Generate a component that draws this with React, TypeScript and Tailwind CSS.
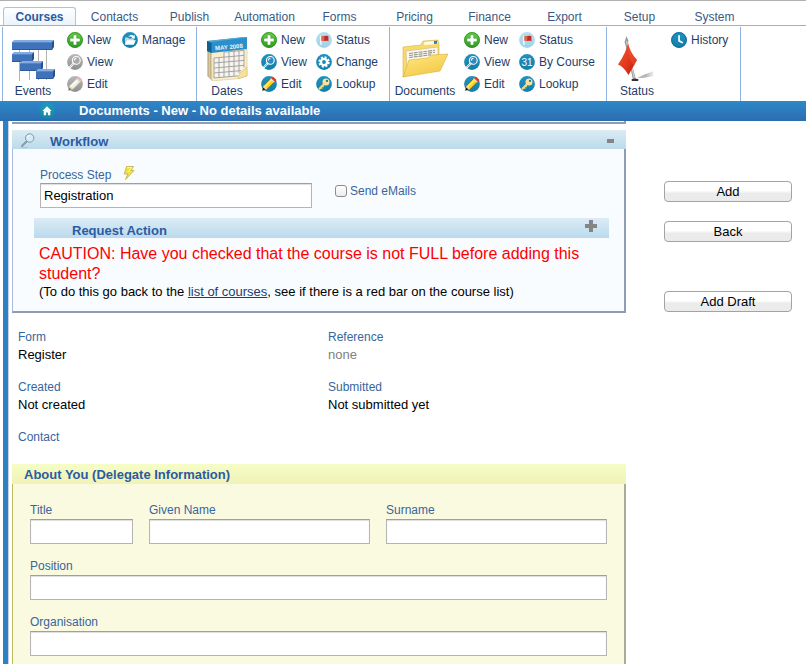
import { useState, type ReactNode } from "react";
import clsx from "clsx";

const tabs = ["Courses", "Contacts", "Publish", "Automation", "Forms", "Pricing", "Finance", "Export", "Setup", "System"];

/* Small round ribbon icons */
const rounds = {
  green: ["#6fcf4b", "#2a9a1c"],
  blue: ["#2391bf", "#0f7fab"],
  gray: ["#b9b9b9", "#8f8f8f"],
  pale: ["#b5dff0", "#9fd2e8"],
  teal: ["#1b9cba", "#0f86a8"],
};

function Round({ tone, children }: { tone: keyof typeof rounds; children: ReactNode }) {
  const [from, to] = rounds[tone];
  return (
    <svg viewBox="0 0 16 16" className="size-4 shrink-0" aria-hidden="true">
      <defs>
        <linearGradient id={`round-${tone}`} x1="0" y1="0" x2="0" y2="1">
          <stop offset="0" stopColor={from} />
          <stop offset="1" stopColor={to} />
        </linearGradient>
      </defs>
      <circle cx="8" cy="8" r="7.9" fill={`url(#round-${tone})`} />
      {children}
    </svg>
  );
}

const NewIcon = () => (
  <Round tone="green">
    <circle cx="8" cy="8" r="7.4" fill="none" stroke="#2c8f22" strokeWidth="0.8" />
    <path d="M6.3 3h3.4v3.3H13v3.4H9.7V13H6.3V9.7H3V6.3h3.3z" fill="#fff" stroke="#1f8416" strokeWidth="0.4" />
  </Round>
);

const ViewIcon = ({ muted = false }: { muted?: boolean }) => (
  <Round tone={muted ? "gray" : "blue"}>
    <path d="M3 13.2 7 9" stroke="#fff" strokeWidth="2" strokeLinecap="round" />
    <path d="M3 13.2 7 9" stroke={muted ? "#a5a5a5" : "#2288b5"} strokeWidth="0.7" />
    <circle cx="9.3" cy="6.4" r="3.9" fill={muted ? "#a9a9a9" : "#2f8cbd"} stroke="#fff" strokeWidth="1.1" />
    <path d="M7.4 6.4a2 2 0 0 1 2-2" fill="none" stroke="#fff" strokeWidth="1.1" />
  </Round>
);

const EditIcon = ({ muted = false }: { muted?: boolean }) => (
  <Round tone={muted ? "gray" : "blue"}>
    <path d="m1.4 14.4 1.2-4.8L10 2.2l3.7 3.5L6.4 13z" fill={muted ? "#f1ede3" : "#ffd01e"} stroke={muted ? "#999" : "#4b3a12"} strokeWidth="0.5" />
    <path d="m3.8 10.8 7.2-7.2" stroke={muted ? "#fffdf5" : "#ffee70"} strokeWidth="1.4" />
    <path d="M10 2.2 11.2 1q.7-.5 1.5.2l2.2 2q.8.8.1 1.5l-1.3 1z" fill={muted ? "#e2b9ae" : "#e23a25"} />
    <path d="m9.2 3 .8-.8 3.7 3.5-.8.8z" fill={muted ? "#ddd" : "#e8e8e8"} />
    <path d="m1.4 14.4 1.2-4.8L6.4 13z" fill={muted ? "#e8d9bc" : "#f3d9a8"} />
    <path d="m1.4 14.4.8-3 2.4 2.2z" fill={muted ? "#777" : "#111"} />
  </Round>
);

const ManageIcon = () => (
  <Round tone="blue">
    <path d="M3 12.8V5.400h3l1 1.200h4.800v2" fill="#b7dcec" />
    <path d="m3 12.800 2-4.600h8.800l-2 4.600z" fill="#fff" />
    <path d="M6.300 4.800c1.300-2.100 3.700-2.500 5.200-1l1-1 .4 3.700-3.700-.3 1-1c-1-.9-2.200-.9-3.900-.4z" fill="#fff" />
  </Round>
);

const FlagIcon = () => (
  <Round tone="pale">
    <path d="M4.900 3.400v9.400" stroke="#f7fbfd" strokeWidth="1.5" />
    <path d="M5.600 3.700c2 .9 3.500-.8 6.800.5v5c-3-1.200-4.600.4-6.800-.4z" fill="#c72a22" />
    <path d="M5.600 3.700c1 .5 1.800.3 2.700.1v5.100c-.9.200-1.800.3-2.700-.1z" fill="#e06650" />
  </Round>
);

const ChangeIcon = () => (
  <Round tone="blue">
    <circle cx="8" cy="8" r="3.1" fill="none" stroke="#fff" strokeWidth="2.4" />
    <circle cx="8" cy="8" r="4.8" fill="none" stroke="#fff" strokeWidth="1.8" strokeDasharray="2.1 1.67" />
  </Round>
);

const KeyIcon = () => (
  <Round tone="blue">
    <path d="m3.5 12.7 5-5.200" stroke="#f8d983" strokeWidth="2" strokeLinecap="round" />
    <path d="m4.800 11.200 1.500 1.500M6.300 9.700l1.300 1.300" stroke="#f8d983" strokeWidth="1.2" />
    <circle cx="10" cy="5.9" r="3.5" fill="#fbe19a" />
    <circle cx="11" cy="4.9" r="1.1" fill="#17739c" />
  </Round>
);

const DayIcon = () => (
  <Round tone="blue">
    <text x="8" y="11.6" textAnchor="middle" fontSize="10" fontFamily="Liberation Sans, sans-serif" fill="#fff">31</text>
  </Round>
);

const ClockIcon = () => (
  <Round tone="blue">
    <circle cx="8" cy="8" r="7.3" fill="none" stroke="#0b6c95" strokeWidth="0.9" />
    <path d="M7.200 3.200h1.700v5l3.300 2-.8 1.300-4.200-1.900z" fill="#fff" />
  </Round>
);

/* Large ribbon pictures */
function EventsPicture() {
  const bars = [[2, 6, 40], [2, 18, 20], [10, 27, 21], [26, 35, 17]];
  return (
    <svg viewBox="0 0 46 46" className="h-[46px] w-[46px]" aria-hidden="true">
      <path d="M9.500 5v41M19.500 5v40M28.500 5v40M36.500 5v40" stroke="#b3b3b3" />
      {bars.map(([x, y, w], i) => (
        <g key={i}>
          <path d={`M${x} ${y + 1}l2-2h${w}l-2 2z`} fill="#86abe0" />
          <rect x={x} y={y + 1} width={w} height="8" fill="#4072b9" />
          <path d={`M${x + w} ${y + 1}l2-2v7l-2 3z`} fill="#24508f" />
          <path d={`M${x} ${y + 8.5}h${w}`} stroke="#2d5899" />
          <path d={`M${x} ${y + 1.5}h${w}`} stroke="#5586c9" />
        </g>
      ))}
    </svg>
  );
}

function CalendarPicture() {
  return (
    <svg viewBox="0 0 46 46" className="h-[46px] w-[46px]" aria-hidden="true">
      <path d="M3 16h5v30l-5-5z" fill="#d8cba6" />
      <path d="M4.500 17v25M6.500 18v26" stroke="#b7a87d" strokeWidth="0.7" />
      <path d="m7.500 17 35.500-3v27l-8 2.500L8 46z" fill="#fbeecb" stroke="#d9c48d" strokeWidth="0.6" />
      <path d="M3 6 43 2v12L7.500 18 3 16z" fill="#2a8fca" />
      <path d="m3 6 36-4 4 .500-36 4.500z" fill="#57abd9" />
      <path d="m3 6 4.500 2v10L3 16z" fill="#125f94" />
      <text x="25" y="14" textAnchor="middle" fontSize="6" fontWeight="bold" fontFamily="Liberation Sans, sans-serif" fill="#f0f9fe" transform="rotate(-5 25 12)">MAY 2008</text>
      <g transform="translate(10 21) skewY(-5)" fill="none" stroke="#9d9d9d" strokeWidth="0.9">
        <path d="M10 -3h20v16l-6 9H0V2h10z" fill="#f7f4ec" stroke="none" />
        <path d="M10-3h20M0 2h30M0 7h30M0 12h30M0 17h27M0 22h24M0 2v20M5 2v20M10-3v25M15-3v25M20-3v25M25-3v22M30-3v17" />
      </g>
      <path d="m34 43.500 2-5.500 7-6v9z" fill="#f5e2a0" stroke="#cfb15c" strokeWidth="0.5" />
    </svg>
  );
}

function FolderPicture() {
  return (
    <svg viewBox="0 0 46 46" className="h-[46px] w-[46px]" aria-hidden="true">
      <defs>
        <linearGradient id="folder-front" x1="0" y1="0" x2="0.6" y2="1">
          <stop offset="0" stopColor="#ffe97d" />
          <stop offset="1" stopColor="#f3c94a" />
        </linearGradient>
      </defs>
      <path d="M1 42V12l18-2 2-4 15-1 1 4v14z" fill="#f8da68" stroke="#dcb443" strokeWidth="0.6" />
      <path d="m22.500 7 12.500-1v3l-13 1z" fill="#fffdf2" />
      <path d="m32 6 3-.300v3L32 9z" fill="#2f7fc4" />
      <path d="M4 16 36 12v12L5 34z" fill="#fbf8ee" stroke="#c4b78e" strokeWidth="0.6" />
      <path d="m7 18.500 26-3.200M7 20.500l26-3.200M7 22.500l22-2.700" stroke="#98948a" strokeWidth="1.1" strokeDasharray="4 0.8" />
      <path d="m1 42 6-17 19-2 3-3 17-1-8 17z" fill="url(#folder-front)" stroke="#dcae3a" strokeWidth="0.6" />
    </svg>
  );
}

function FlagPicture() {
  return (
    <svg viewBox="0 0 46 46" className="h-[46px] w-[46px]" aria-hidden="true">
      <defs>
        <linearGradient id="flag-cloth" x1="0" y1="0" x2="1" y2="1">
          <stop offset="0" stopColor="#f4573a" />
          <stop offset="0.6" stopColor="#e0341a" />
          <stop offset="1" stopColor="#a81a0a" />
        </linearGradient>
        <linearGradient id="flag-shadow">
          <stop offset="0" stopColor="#c2c2c2" />
          <stop offset="0.5" stopColor="#b5b5b5" />
          <stop offset="1" stopColor="#f2f2f2" />
        </linearGradient>
      </defs>
      <path d="m23 43 6-3 11-4-1 3 1 2-11 2z" fill="url(#flag-shadow)" />
      <path d="m12.500 1 2 5-1.500 4 9 35h-3L11.500 10l-1-3z" fill="#9b9b9b" />
      <path d="m12.500 6 1 5 7 34" fill="none" stroke="#d5d5d5" />
      <path d="M14 8q2 10 9 17L14.500 40Q10 32 4 29.500 12 18 14 8z" fill="url(#flag-cloth)" />
      <path d="M14 8q2 9 9 17l-3 6Q13 22 14 8z" fill="#f2553a" opacity="0.5" />
      <ellipse cx="21" cy="45" rx="3.5" ry="1.5" fill="#333" />
    </svg>
  );
}

type Action = [label: string, icon: ReactNode];

type Group = {
  title: string;
  picture: ReactNode;
  width: string;
  lead: string;
  columns: Action[][];
};

const groups: Group[] = [
  {
    title: "Events",
    picture: <EventsPicture />,
    width: "w-[194px]",
    lead: "w-16",
    columns: [
      [["New", <NewIcon />], ["View", <ViewIcon muted />], ["Edit", <EditIcon muted />]],
      [["Manage", <ManageIcon />]],
    ],
  },
  {
    title: "Dates",
    picture: <CalendarPicture />,
    width: "w-[193px]",
    lead: "w-16",
    columns: [
      [["New", <NewIcon />], ["View", <ViewIcon />], ["Edit", <EditIcon />]],
      [["Status", <FlagIcon />], ["Change", <ChangeIcon />], ["Lookup", <KeyIcon />]],
    ],
  },
  {
    title: "Documents",
    picture: <FolderPicture />,
    width: "w-[217px]",
    lead: "w-[74px]",
    columns: [
      [["New", <NewIcon />], ["View", <ViewIcon />], ["Edit", <EditIcon />]],
      [["Status", <FlagIcon />], ["By Course", <DayIcon />], ["Lookup", <KeyIcon />]],
    ],
  },
  {
    title: "Status",
    picture: <FlagPicture />,
    width: "w-[135px] border-r",
    lead: "w-16",
    columns: [[["History", <ClockIcon />]]],
  },
];

function Ribbon() {
  return (
    <div className="flex h-[75px] pl-0.5 pt-px">
      {groups.map((group) => (
        <section key={group.title} className={clsx("flex shrink-0 border-l border-[#8db2e3]", group.width)}>
          <a href="#" className={clsx("flex shrink-0 flex-col items-center pr-1 pt-2", group.lead)}>
            {group.picture}
            <span className="leading-5">{group.title}</span>
          </a>
          {group.columns.map((column, i) => (
            <ul key={i} className="w-[55px] shrink-0 pt-0.5">
              {column.map(([label, icon]) => (
                <li key={label}>
                  <a href="#" className="flex h-[22px] items-center gap-1 whitespace-nowrap">
                    {icon}
                    {label}
                  </a>
                </li>
              ))}
            </ul>
          ))}
        </section>
      ))}
    </div>
  );
}

function TextField({ id, label, className }: { id: string; label: string; className?: string }) {
  return (
    <div className={className}>
      <label htmlFor={id} className="block text-xs leading-[18px] text-[#38659c]">{label}</label>
      <input id={id} type="text" className={inputStyle} />
    </div>
  );
}

const inputStyle =
  "block h-[25px] w-full border border-[#b5b5b5] border-t-[#9f9f9f] bg-white px-[3px] text-[13px] text-black shadow-[inset_0_1px_1px_#dddddd] outline-none";

function Detail({ label, children }: { label: string; children?: ReactNode }) {
  return (
    <div className="h-[50px]">
      <dt className="text-xs leading-[18px] text-[#38659c]">{label}</dt>
      <dd className="text-[13px] leading-[17px]">{children}</dd>
    </div>
  );
}

const sideButton =
  "block h-[21px] w-full rounded-[4px] border border-[#a3a3a3] bg-linear-to-b from-white from-45% to-[#ebebeb] to-60% text-[13px] leading-[19px] text-black";

export default function App() {
  const [sendMails, setSendMails] = useState(false);
  const [step, setStep] = useState("Registration");

  return (
    <div className="flex min-h-screen flex-col bg-white font-['Liberation_Sans',Arial,sans-serif] text-black">
      <header className="text-xs text-[#1e3d6b]">
        <nav className="flex h-[26px] items-end gap-0.5 border-t border-b border-t-[#b0b0b0] border-b-[#8db2e3] pl-[3px]">
          {tabs.map((tab, i) => (
            <a
              key={tab}
              href="#"
              className={clsx(
                "w-[73px] shrink-0 pt-px text-center leading-4",
                i === 0
                  ? "rounded-t-[3px] border border-b-0 border-[#a9c4e6] bg-linear-to-b from-white to-[#ebf3fb] font-bold text-[#2a5aa0]"
                  : "text-[#3b5a82]"
              )}
            >
              {tab}
            </a>
          ))}
        </nav>
        <Ribbon />
      </header>

      <div className="flex h-5 items-center bg-linear-to-b from-[#2d88c8] to-[#2b6db0] pl-[39px] text-white">
        <a href="#" aria-label="Home">
          <Round tone="teal">
            <path d="M8 3.200 3.300 8h1.400v4.300h2.400V9.500h1.800v2.800h2.400V8h1.400z" fill="#fff" />
          </Round>
        </a>
        <h1 className="pl-6 text-[13px] font-bold">Documents - New - No details available</h1>
      </div>

      <div className="ml-[3px] flex flex-1 border-l-[5px] border-[#2d83c1]">
        <main className="flex min-w-0 flex-1 flex-col border-l border-[#c9cfe4] pl-[3px]">
          {/* bottom edge of the panel scrolled under the title bar */}
          <div className="h-[3px] border-r-2 border-b-2 border-[#8f9db3]" />

          <section className="mt-1.5">
            <div className="flex h-[19px] items-center bg-linear-to-b from-[#dbecf4] to-[#bbdaec] pr-3 pl-2">
              <svg viewBox="0 0 16 16" className="size-4" aria-hidden="true">
                <path d="m2 14 4.500-4.500" stroke="#8b9aa3" strokeWidth="2" strokeLinecap="round" />
                <circle cx="9.7" cy="6" r="4.2" fill="#d3ecf7" stroke="#8199a8" />
                <path d="M7.500 5.500a2.500 2.500 0 0 1 2-2" fill="none" stroke="#fff" />
                <path d="M1 15.500h7" stroke="#a3b5bf" strokeWidth="0.6" />
              </svg>
              <h2 className="flex-1 pt-1 pl-3.5 text-[13px] leading-[17px] font-bold text-[#2b5ba3]">Workflow</h2>
              <button type="button" aria-label="Collapse Workflow" className="pt-0.5">
                <svg viewBox="0 0 7 4" className="h-1 w-[7px]"><path d="M0 0h7v4H0z" fill="#858585" /></svg>
              </button>
            </div>

            <div className="border-r-2 border-b-2 border-l border-[#8f9db3] border-l-[#a9bbdd] bg-[#f8fcff] pt-[17px] pr-[15px] pb-[11px] pl-[21px]">
              <div className="flex pl-1.5">
                <div className="w-[272px]">
                  <div className="flex h-[17px] items-start">
                    <label htmlFor="step" className="text-xs leading-[18px] text-[#38659c]">Process Step</label>
                    <svg viewBox="0 0 12 14" className="ml-3 h-3.5 w-3" aria-hidden="true">
                      <path d="M3.500.500h7L8 4.500h3L2.500 13.500l2.300-5.500H1.200z" fill="#f0e04a" stroke="#b5a83c" strokeWidth="0.7" />
                      <path d="M4.300 1.500h4.200L5.500 6" fill="none" stroke="#fffbb0" strokeWidth="0.8" />
                    </svg>
                  </div>
                  <input id="step" type="text" value={step} onChange={(e) => setStep(e.target.value)} className={inputStyle} />
                </div>
                <label className="mt-4 ml-[23px] flex h-[18px] items-center gap-[3px] text-xs text-[#38659c]">
                  <input
                    type="checkbox"
                    checked={sendMails}
                    onChange={(e) => setSendMails(e.target.checked)}
                    className="size-3 appearance-none rounded-[3px] border border-[#8c8c8c] bg-linear-to-b from-white to-[#ececec] checked:bg-[#38659c]"
                  />
                  Send eMails
                </label>
              </div>

              <div className="mt-2.5 flex h-5 items-start bg-linear-to-b from-[#dbecf4] to-[#bbdaec] pr-3 pl-[38px]">
                <h3 className="flex-1 pt-1 text-[13px] leading-[17px] font-bold text-[#2b5ba3]">Request Action</h3>
                <button type="button" aria-label="Expand Request Action" className="pt-0.5">
                  <svg viewBox="0 0 12 12" className="size-3"><path d="M4 0h4v4h4v4H8v4H4V8H0V4h4z" fill="#858585" /></svg>
                </button>
              </div>

              <div className="pt-1.5 pl-[5px]">
                <p className="text-base leading-5 text-[#ff0000]">
                  CAUTION: Have you checked that the course is not FULL before adding this student?
                </p>
                <p className="text-[13px] leading-4">
                  (To do this go back to the <a href="#" className="text-[#1e3d6b] underline">list of courses</a>, see if there is a red bar on the course list)
                </p>
              </div>
            </div>
          </section>

          <dl className="grid grid-cols-2 gap-x-3 pt-[15px] pl-1.5">
            <Detail label="Form">Register</Detail>
            <Detail label="Reference"><span className="text-[#808080]">none</span></Detail>
            <Detail label="Created">Not created</Detail>
            <Detail label="Submitted">Not submitted yet</Detail>
            <Detail label="Contact" />
          </dl>

          <section className="-mt-3.5 flex flex-1 flex-col">
            <h2 className="h-5 bg-linear-to-b from-[#f5fdc6] to-[#f1f2b6] pl-3 text-[13px] leading-[21px] font-bold text-[#2b5ba3]">
              About You (Delegate Information)
            </h2>
            <div className="grid flex-1 grid-cols-[103px_1fr_1fr] content-start gap-x-4 gap-y-[13px] border-r-2 border-l border-r-[#a9ad98] border-l-[#bdbd5c] bg-[#fafae1] px-[17px] pt-[17px] pb-2">
              <TextField id="title" label="Title" />
              <TextField id="given-name" label="Given Name" />
              <TextField id="surname" label="Surname" />
              <TextField id="position" label="Position" className="col-span-3" />
              <TextField id="organisation" label="Organisation" className="col-span-3" />
            </div>
          </section>
        </main>

        <aside className="w-[180px] shrink-0 pt-[60px] pr-3.5 pl-[38px]">
          <button type="button" className={sideButton}>Add</button>
          <button type="button" className={clsx("mt-[19px]", sideButton)}>Back</button>
          <button type="button" className={clsx("mt-[49px]", sideButton)}>Add Draft</button>
        </aside>
      </div>
    </div>
  );
}
